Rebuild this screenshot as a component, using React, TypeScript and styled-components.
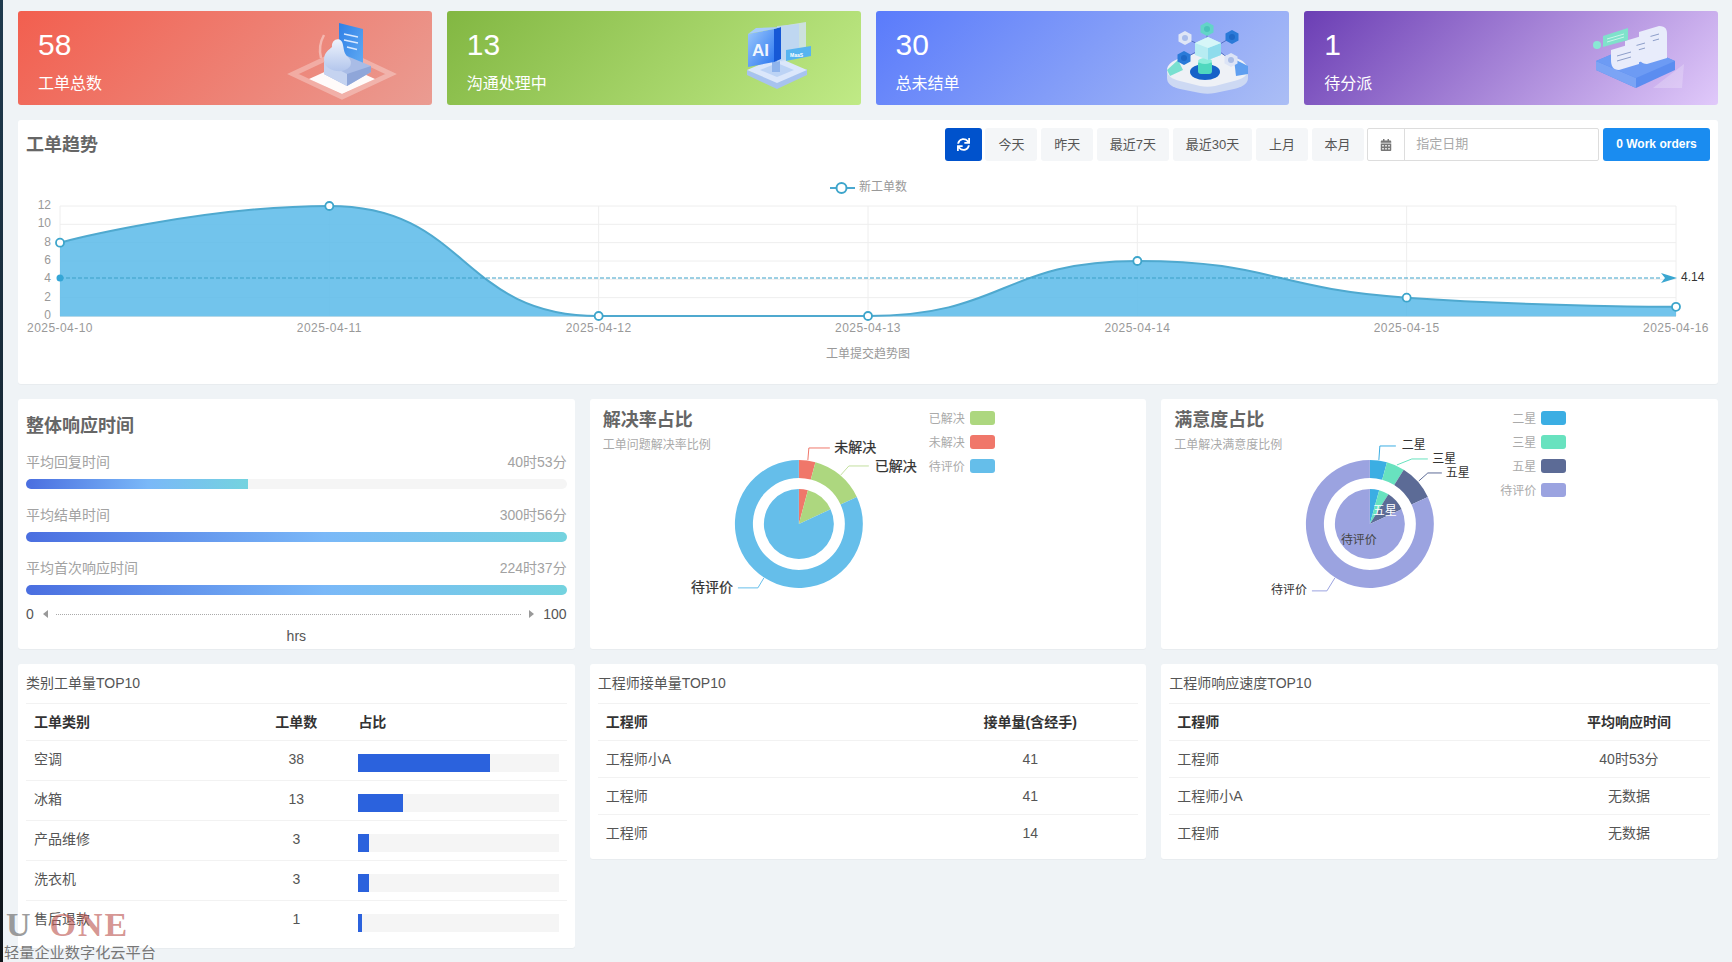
import React from "react";
import styled, { createGlobalStyle } from "styled-components";
import { FaSync, FaCalendarAlt } from "react-icons/fa";

const Global = createGlobalStyle`
  html, body { margin: 0; padding: 0; height: 100%; background: #eff3f6; }
  * { box-sizing: border-box; }
  body { font-family: "Liberation Sans", "Noto Sans CJK SC", sans-serif; color: #555; overflow: hidden; }
`;

const Shell = styled.div`
  position: relative;
  display: flex;
  height: 100vh;
  background: #eff3f6;
`;
const Strip = styled.div`
  width: 3px;
  flex: none;
  background: linear-gradient(180deg, #1f3a4e, #0f1419);
`;
const Main = styled.main`
  flex: 1;
  min-width: 0;
  padding: 11px 14px 0 15px;
  display: flex;
  flex-direction: column;
  gap: 15px;
`;
const StatRow = styled.section`
  display: grid;
  grid-template-columns: repeat(4, 1fr);
  gap: 15px;
`;
const StatCard = styled.div<{ $from: string; $to: string; $right: number }>`
  height: 94px;
  border-radius: 3px;
  padding: 17px 0 0 20px;
  color: #fff;
  display: flex;
  justify-content: space-between;
  background: linear-gradient(135deg, ${(p) => p.$from}, ${(p) => p.$to});
  svg { margin: -14px ${(p) => p.$right}px 0 0; flex: none; }
`;
const StatNumber = styled.div`
  font-size: 30px;
  line-height: 34px;
`;
const StatLabel = styled.div`
  font-size: 16px;
  line-height: 22px;
  margin-top: 11px;
`;
const Panel = styled.section`
  position: relative;
  background: #fff;
  border-radius: 3px;
  box-shadow: 0 1px 1px rgba(0, 0, 0, 0.03);
`;
const TrendPanel = styled(Panel)`
  height: 264px;
  padding-top: 8px;
`;
const TrendHead = styled.header`
  display: flex;
  align-items: center;
  height: 33px;
  padding: 0 8px;
  gap: 3.7px;
`;
const PanelTitle = styled.h2`
  margin: 0;
  font-size: 18px;
  line-height: 24px;
  font-weight: 700;
  color: #666;
`;
const Spacer = styled.div`
  flex: 1;
`;
const RefreshButton = styled.button`
  width: 37px;
  height: 33px;
  border: 0;
  border-radius: 3px;
  background: #0052cc;
  color: #fff;
  font-size: 13px;
  display: flex;
  align-items: center;
  justify-content: center;
  padding: 0;
`;
const RangeButton = styled.button`
  height: 33px;
  padding: 0 13px 3px;
  border: 0;
  border-radius: 3px;
  background: #f4f6f8;
  color: #555;
  font: 13px "Liberation Sans", "Noto Sans CJK SC", sans-serif;
`;
const DateField = styled.div`
  width: 232px;
  height: 33px;
  display: flex;
  border: 1px solid #ddd;
  border-radius: 2px;
`;
const DateAddon = styled.span`
  width: 37px;
  flex: none;
  display: flex;
  align-items: center;
  justify-content: center;
  border-right: 1px solid #ddd;
  color: #777;
  font-size: 12px;
`;
const DateInput = styled.input`
  flex: 1;
  min-width: 0;
  border: 0;
  outline: 0;
  padding: 0 11px 2px;
  background: transparent;
  font: 13px "Liberation Sans", "Noto Sans CJK SC", sans-serif;
  &::placeholder { color: #aaa; }
`;
const OrdersButton = styled.button`
  width: 107px;
  height: 33px;
  border: 0;
  border-radius: 3px;
  background: #1a8cf0;
  color: #fff;
  font: 700 12px "Liberation Sans", "Noto Sans CJK SC", sans-serif;
  padding: 0 0 2px;
`;
const TrendChart = styled.svg`
  display: block;
  margin-top: 9px;
`;
const AxisText = styled.text<{ $wide?: boolean }>`
  font-size: 12px;
  fill: #999;
  letter-spacing: ${(p) => (p.$wide ? "0.45px" : "0")};
`;
const ThreeCols = styled.section<{ $top?: boolean }>`
  display: grid;
  grid-template-columns: repeat(3, minmax(0, 1fr));
  gap: 15px;
  align-items: ${(p) => (p.$top ? "start" : "stretch")};
`;
const ResponsePanel = styled(Panel)`
  padding: 15px 8px 3px 8px;
`;
const MetricHead = styled.div`
  display: flex;
  justify-content: space-between;
  margin-top: 16px;
  font-size: 14px;
  line-height: 20px;
  color: #a2a2a2;
  &:first-of-type { margin-top: 14px; }
`;
const Track = styled.div`
  height: 10px;
  margin-top: 7px;
  border-radius: 5px;
  background: #f5f5f5;
  overflow: hidden;
`;
const Fill = styled.div`
  height: 100%;
  background: linear-gradient(90deg, #4a6ee0, #7ab8f8 55%, #74d3df);
`;
const RangeAxis = styled.div`
  display: flex;
  align-items: center;
  margin-top: 9px;
  font-size: 14px;
  line-height: 20px;
  color: #555;
`;
const Arrow = styled.i<{ $right?: boolean }>`
  width: 0;
  height: 0;
  margin: 0 ${(p) => (p.$right ? "9px" : "0")} 0 ${(p) => (p.$right ? "0" : "9px")};
  border-top: 4px solid transparent;
  border-bottom: 4px solid transparent;
  ${(p) => (p.$right ? "border-left: 5px solid #999;" : "border-right: 5px solid #999;")}
`;
const DottedLine = styled.div`
  flex: 1;
  margin: 0 8px;
  border-top: 1px dotted #aaa;
`;
const Unit = styled.div`
  margin-top: 2px;
  text-align: center;
  font-size: 14px;
  line-height: 20px;
  color: #555;
`;
const PieHead = styled.div`
  width: 405px;
  padding: 9px 0 0 13px;
  display: flex;
  justify-content: space-between;
  align-items: flex-start;
`;
const PieSub = styled.p`
  margin: 4px 0 0;
  font-size: 12px;
  line-height: 18px;
  color: #aaa;
`;
const Legend = styled.ul`
  list-style: none;
  margin: 3px 0 0;
  padding: 0;
  display: flex;
  flex-direction: column;
  gap: 10px;
`;
const LegendRow = styled.li`
  display: flex;
  justify-content: flex-end;
  align-items: center;
  gap: 5px;
  height: 14px;
  font-size: 12px;
  color: #aaa;
`;
const LegendText = styled.span`
  position: relative;
  top: -1px;
`;
const Swatch = styled.span<{ $color: string }>`
  width: 25px;
  height: 14px;
  border-radius: 3px;
  background: ${(p) => p.$color};
`;
const PieCanvas = styled.svg`
  position: absolute;
  inset: 0;
  width: 100%;
  height: 100%;
  pointer-events: none;
`;
const PieLabel = styled.text<{ $size: number; $tone: string }>`
  font-size: ${(p) => p.$size}px;
  fill: ${(p) => p.$tone};
  stroke: ${(p) => (p.$size > 12 ? p.$tone : "none")};
  stroke-width: 0.25px;
`;
const TablePanel = styled(Panel)`
  padding: 9px 8px 8px;
`;
const TableTitle = styled.h3`
  margin: 0 0 10px;
  font-size: 14px;
  line-height: 20px;
  font-weight: 400;
  color: #555;
`;
const Table = styled.table`
  width: 100%;
  table-layout: fixed;
  border-collapse: separate;
  border-spacing: 0;
  font-size: 14px;
  line-height: 20px;
`;
const Th = styled.th<{ $w: string; $center?: boolean }>`
  width: ${(p) => p.$w};
  padding: 8px;
  border-top: 1px solid #f2f2f2;
  font-weight: 700;
  color: #333;
  text-align: ${(p) => (p.$center ? "center" : "left")};
`;
const Td = styled.td<{ $center?: boolean }>`
  padding: 8px;
  border-top: 1px solid #f2f2f2;
  color: #555;
  vertical-align: top;
  text-align: ${(p) => (p.$center ? "center" : "left")};
`;
const ShareTrack = styled.div`
  height: 18px;
  margin-top: 5px;
  background: #f5f5f5;
`;
const ShareFill = styled.div`
  height: 100%;
  background: #2b62dd;
`;
const Watermark = styled.div`
  position: absolute;
  left: 4px;
  bottom: -1px;
  pointer-events: none;
`;
const LogoLine = styled.div`
  display: flex;
  font-family: "Liberation Serif", serif;
  font-size: 34px;
  font-weight: 700;
  line-height: 24px;
  height: 24px;
  margin-left: 2px;
`;
const LogoU = styled.span`
  color: rgba(130, 130, 130, 0.8);
  margin-right: 19px;
`;
const LogoOne = styled.span`
  color: rgba(190, 90, 85, 0.65);
  letter-spacing: 2px;
`;
const LogoCaption = styled.div`
  font-size: 15.2px;
  line-height: 20px;
  color: #777;
  margin-top: 6px;
`;

const xs = [0, 1, 2, 3, 4, 5, 6].map((i) => 42 + (i * 1616) / 6);
const values = [8, 12, 0, 0, 6, 2, 1];
const yOf = (v: number) => 146 - (v * 110) / 12;
const points = values.map((v, i) => [xs[i], yOf(v)]);
const dates = ["10", "11", "12", "13", "14", "15", "16"].map((d) => `2025-04-${d}`);

const clamp = (v: number, a: number, b: number) => Math.max(Math.min(a, b), Math.min(Math.max(a, b), v));

function smoothPath(pts: number[][], smooth = 0.5) {
  let d = `M${pts[0][0]} ${pts[0][1]}`;
  let cpx = pts[0][0];
  let cpy = pts[0][1];
  for (let i = 0; i < pts.length - 1; i++) {
    const [x, y] = pts[i + 1];
    let nx = x;
    let ny = y;
    let c2x = x;
    let c2y = y;
    if (i + 2 < pts.length) {
      const [px, py] = pts[i];
      const [qx, qy] = pts[i + 2];
      const lp = Math.hypot(x - px, y - py) || 1;
      const ln = Math.hypot(qx - x, qy - y) || 1;
      const r = ln / (ln + lp);
      nx = clamp(x + (qx - px) * smooth * r, x, qx);
      ny = clamp(y + (qy - py) * smooth * r, y, qy);
      c2x = clamp(x - ((nx - x) * lp) / ln, px, x);
      c2y = clamp(y - ((ny - y) * lp) / ln, py, y);
      nx = x + ((x - c2x) * ln) / lp;
      ny = y + ((y - c2y) * ln) / lp;
    }
    d += `C${cpx} ${cpy} ${c2x} ${c2y} ${x} ${y}`;
    cpx = nx;
    cpy = ny;
  }
  return d;
}

const linePath = smoothPath(points);
const areaPath = `${linePath}L${xs[6]} 146L${xs[0]} 146Z`;

function polar(r: number, deg: number, cx = 209, cy = 125) {
  const a = (deg * Math.PI) / 180;
  return `${cx + r * Math.sin(a)} ${cy - r * Math.cos(a)}`;
}
function ringSlice(a: number, b: number, ro: number, ri: number) {
  const large = b - a > 180 ? 1 : 0;
  if (ri === 0) return `M209 125L${polar(ro, a)}A${ro} ${ro} 0 ${large} 1 ${polar(ro, b)}Z`;
  return `M${polar(ro, a)}A${ro} ${ro} 0 ${large} 1 ${polar(ro, b)}L${polar(ri, b)}A${ri} ${ri} 0 ${large} 0 ${polar(ri, a)}Z`;
}

type Slice = { from: number; to: number; color: string };
type Label = { text: string; x: number; y: number; line: string; color: string };

function PieChart({ slices, labels, size, inner }: { slices: Slice[]; labels: Label[]; size: number; inner?: React.ReactNode }) {
  return (
    <PieCanvas viewBox="0 0 557 250" preserveAspectRatio="xMinYMin meet">
      {slices.map((s) => (
        <path key={`o${s.from}`} d={ringSlice(s.from, s.to, 64, 46)} fill={s.color} />
      ))}
      {slices.map((s) => (
        <path key={`i${s.from}`} d={ringSlice(s.from, s.to, 35, 0)} fill={s.color} />
      ))}
      {labels.map((l) => (
        <g key={l.text}>
          <polyline points={l.line} fill="none" stroke={l.color} strokeWidth="1" />
          <PieLabel x={l.x} y={l.y} $size={size} $tone="#333" dominantBaseline="central">
            {l.text}
          </PieLabel>
        </g>
      ))}
      {inner}
    </PieCanvas>
  );
}

const BLUE = "#65beea";
const solved: Slice[] = [
  { from: 0, to: 15, color: "#f0776a" },
  { from: 15, to: 65, color: "#add77f" },
  { from: 65, to: 360, color: BLUE },
];
const solvedLabels: Label[] = [
  { text: "未解决", x: 244.5, y: 48, line: "218,61 219,49 240,49", color: "#f0776a" },
  { text: "已解决", x: 285, y: 67, line: "251,76 259,67 279,67", color: "#c3e09f" },
  { text: "待评价", x: 101, y: 188, line: "174,179 168,189 148,189", color: BLUE },
];
const rated: Slice[] = [
  { from: 0, to: 15.5, color: "#3baee3" },
  { from: 15.5, to: 32, color: "#68e2bf" },
  { from: 32, to: 65, color: "#5c6b96" },
  { from: 65, to: 360, color: "#9ba3e0" },
];
const ratedLabels: Label[] = [
  { text: "二星", x: 241, y: 46, line: "218,61 219,47 235,47", color: "#3baee3" },
  { text: "三星", x: 271.5, y: 60, line: "236,66 251,60 267,60", color: "#68e2bf" },
  { text: "五星", x: 285, y: 74, line: "258,82 267,74 281,74", color: "#5c6b96" },
  { text: "待评价", x: 110, y: 191, line: "174,179 166,192 151,192", color: "#9ba3e0" },
];

const categories = [
  { name: "空调", count: 38 },
  { name: "冰箱", count: 13 },
  { name: "产品维修", count: 3 },
  { name: "洗衣机", count: 3 },
  { name: "售后退款", count: 1 },
];

function TicketArt() {
  return (
    <svg width="110" height="88" viewBox="0 0 110 88">
      <defs>
        <linearGradient id="t1" x1="0" y1="0" x2="1" y2="1">
          <stop offset="0" stopColor="#2f7fe6" />
          <stop offset="1" stopColor="#64aef4" />
        </linearGradient>
        <linearGradient id="t2" x1="0" y1="0" x2="0" y2="1">
          <stop offset="0" stopColor="#eef3fc" />
          <stop offset="1" stopColor="#b3c6ec" />
        </linearGradient>
      </defs>
      <polygon points="55,37 104,60 55,83 6,60" fill="none" stroke="#fff" strokeOpacity=".3" strokeWidth="5" />
      <polygon points="55,50 88,65 55,80 22,65" fill="#fff" fillOpacity=".96" />
      <polygon points="52,9 76,15 76,58 52,52" fill="url(#t1)" />
      <path d="M57 20l14 3M57 26l14 3M60 33l10 2.500" stroke="#dbe9ff" strokeWidth="1.300" />
      <path d="M37 48L60 42L84 52V58L60 72L37 60Z" fill="#a9bce6" />
      <path d="M37 48L60 60V72L37 60Z" fill="#c5d3f0" />
      <path d="M60 60L84 52V58L60 72Z" fill="#8fa6d9" />
      <path d="M37 46c0-8 5-10 8-13c-1-9 10-11 11-2c1 5 1 9 6 13c4 5 2 11-7 13c-8 1-18-3-18-11z" fill="url(#t2)" />
      <path d="M34 44c-2-8-1-16 3-23" fill="none" stroke="#fff" strokeOpacity=".4" strokeWidth="2.500" />
    </svg>
  );
}

function AiArt() {
  return (
    <svg width="110" height="88" viewBox="0 0 110 88">
      <defs>
        <linearGradient id="a1" x1="0" y1="0" x2="1" y2="1">
          <stop offset="0" stopColor="#9cc8fc" />
          <stop offset="1" stopColor="#2a76f0" />
        </linearGradient>
      </defs>
      <polygon points="56,68 86,55 86,61 56,75 26,61 26,56" fill="#a7c3ef" />
      <polygon points="56,43 86,56 56,69 26,56" fill="#dbe7fb" />
      <polygon points="56,49 73,56 56,63 39,56" fill="#bcd3f5" />
      <rect x="51" y="44" width="8" height="14" fill="#8fb4ec" />
      <polygon points="60,12 85,8 85,42 60,48" fill="#d3e2f7" fillOpacity=".8" />
      <polygon points="56,12 78,10 78,42 56,48" fill="#bcd4f6" fillOpacity=".8" />
      <polygon points="27,20 53,15 53,48 27,53" fill="url(#a1)" />
      <polygon points="53,15 60,13 60,45 53,48" fill="#1658d6" />
      <polygon points="27,20 35,14 60,13 53,15" fill="#a8cdfb" />
      <text x="31" y="42" fontSize="17" fontWeight="700" fontFamily="Liberation Sans, sans-serif" fill="#fff" fillOpacity=".92">AI</text>
      <polygon points="65,36 90,32 90,42 65,47" fill="#57b4f0" />
      <text x="69" y="43" fontSize="5" fontWeight="700" fontFamily="Liberation Sans, sans-serif" fill="#fff">MaaS</text>
    </svg>
  );
}

function NodesArt() {
  const hex = (cx: number, cy: number, fill: string, hole?: string) => (
    <g key={`${cx}-${cy}`}>
      <polygon points={`${cx},${cy - 7} ${cx + 6.500},${cy - 3.500} ${cx + 6.500},${cy + 3.500} ${cx},${cy + 7} ${cx - 6.500},${cy + 3.500} ${cx - 6.500},${cy - 3.500}`} fill={fill} />
      {hole && <circle cx={cx} cy={cy} r="3" fill={hole} />}
    </g>
  );
  return (
    <svg width="110" height="88" viewBox="0 0 110 88">
      <path d="M15 60C15 54 20 50 28 47L48 41C53 40 58 40 63 41L84 47C91 49 96 54 96 60V64C96 70 90 73 82 75L63 79C58 80 53 80 48 79L28 75C20 73 15 70 15 64Z" fill="#cdd9f3" />
      <path d="M15 56C15 51 20 47 28 44L48 38C53 37 58 37 63 38L84 44C91 46 96 51 96 56C96 62 90 65 82 67L63 72C58 73 53 73 48 72L28 67C20 65 15 62 15 56Z" fill="#eef1f6" />
      <path d="M82 45L96 52V60L84 62Z" fill="#5f9ff0" />
      <path d="M15 56L26 46L31 56L18 62Z" fill="#79e0d0" />
      <ellipse cx="53" cy="58" rx="15" ry="8" fill="#1662c8" />
      <rect x="46" y="47" width="14" height="13" rx="3" fill="#4fd8bf" />
      <ellipse cx="53" cy="47" rx="7" ry="3" fill="#8eeedd" />
      <path d="M33 24L46 30M80 23L68 30M33 44L44 38M79 46L68 38M55 16V26" stroke="#5470c6" strokeWidth="1" />
      <polygon points="56,23 69,29 69,41 56,46 43,41 43,29" fill="#b7ecf2" />
      <polygon points="56,34 69,29 69,41 56,46" fill="#8fdcec" />
      <polygon points="56,23 69,29 56,34 43,29" fill="#d6f6f8" />
      {hex(33, 24, "#dfe6f6", "#a9bdec")}
      {hex(55, 15, "#63d4c8", "#4bc3bb")}
      {hex(80, 23, "#2a7ad8", "#1e68c6")}
      {hex(32, 44, "#2a7ad8", "#1e68c6")}
      {hex(79, 46, "#dce4f6", "#aabde6")}
    </svg>
  );
}

function PaperArt() {
  const paper = (x: number, y: number, h: number) => (
    <g key={x}>
      <path d={`M${x} ${y + 4}L${x + 20} ${y - 2}C${x + 27} ${y - 2} ${x + 28} ${y + 2} ${x + 28} ${y + 6}V${y + h - 6}L${x + 8} ${y + h}C${x + 2} ${y + h} ${x} ${y + h - 4} ${x} ${y + h - 10}Z`} fill="#e8ecfb" />
      <path d={`M${x + 6} ${y + 10}l14-4M${x + 6} ${y + 15}l14-4`} stroke="#8d9ec9" strokeWidth="1" />
    </g>
  );
  return (
    <svg width="110" height="88" viewBox="0 0 110 88">
      <polygon points="71,74 102,50 100,74" fill="#fff" fillOpacity=".22" />
      <polygon points="14,47 54,30 93,47 93,56 54,74 14,56" fill="#5b8df0" />
      <polygon points="14,47 54,64 54,74 14,56" fill="#7ba4f5" />
      <polygon points="14,47 54,30 93,47 54,64" fill="#6d9bf4" />
      {paper(57, 14, 36)}
      {paper(43, 23, 27)}
      {paper(29, 32, 24)}
      <polygon points="21,22 46,14 46,26 21,33" fill="#7fe2cb" />
      <path d="M25 25l17-5M25 28l17-5" stroke="#c9f6ea" strokeWidth="1" />
      <circle cx="15" cy="31" r="4" fill="#89e8d4" />
    </svg>
  );
}

export default function App() {
  return (
    <Shell>
      <Global />
      <Strip />
      <Main>
        <StatRow>
          <StatCard $from="#f25f4f" $to="#ea9c92" $right={35}>
            <div>
              <StatNumber>58</StatNumber>
              <StatLabel>工单总数</StatLabel>
            </div>
            <TicketArt />
          </StatCard>
          <StatCard $from="#82b742" $to="#c0ea86" $right={30}>
            <div>
              <StatNumber>13</StatNumber>
              <StatLabel>沟通处理中</StatLabel>
            </div>
            <AiArt />
          </StatCard>
          <StatCard $from="#5a7bfb" $to="#abbef5" $right={27}>
            <div>
              <StatNumber>30</StatNumber>
              <StatLabel>总未结单</StatLabel>
            </div>
            <NodesArt />
          </StatCard>
          <StatCard $from="#6b3eb4" $to="#e0c9fa" $right={26}>
            <div>
              <StatNumber>1</StatNumber>
              <StatLabel>待分派</StatLabel>
            </div>
            <PaperArt />
          </StatCard>
        </StatRow>

        <TrendPanel>
          <TrendHead>
            <PanelTitle>工单趋势</PanelTitle>
            <Spacer />
            <RefreshButton aria-label="refresh">
              <FaSync />
            </RefreshButton>
            <RangeButton>今天</RangeButton>
            <RangeButton>昨天</RangeButton>
            <RangeButton>最近7天</RangeButton>
            <RangeButton>最近30天</RangeButton>
            <RangeButton>上月</RangeButton>
            <RangeButton>本月</RangeButton>
            <DateField>
              <DateAddon>
                <FaCalendarAlt />
              </DateAddon>
              <DateInput placeholder="指定日期" readOnly />
            </DateField>
            <OrdersButton>0 Work orders</OrdersButton>
          </TrendHead>
          <TrendChart width="1700" height="195" viewBox="0 0 1700 195">
            <line x1="812" y1="18" x2="837" y2="18" stroke="#4aa8d0" strokeWidth="2" />
            <circle cx="823.500" cy="18" r="5" fill="#fff" stroke="#3da5cb" strokeWidth="2" />
            <AxisText x="841" y="17" dominantBaseline="central">新工单数</AxisText>
            {[0, 2, 4, 6, 8, 10, 12].map((v) => (
              <g key={v}>
                {v > 0 && <line x1={xs[0]} x2={xs[6]} y1={yOf(v)} y2={yOf(v)} stroke="#eeeeee" />}
                <AxisText x="33" y={yOf(v) - 1} textAnchor="end" dominantBaseline="central">{v}</AxisText>
              </g>
            ))}
            {xs.map((x, i) => (
              <g key={x}>
                <line x1={x} x2={x} y1="36" y2="146" stroke="#eeeeee" />
                <AxisText $wide x={x} y="158" textAnchor="middle" dominantBaseline="central">{dates[i]}</AxisText>
              </g>
            ))}
            <path d={areaPath} fill="#5dbbe9" fillOpacity=".87" />
            <line x1={xs[0]} x2={xs[6]} y1="146.500" y2="146.500" stroke="#b5d8e8" />
            <path d={linePath} fill="none" stroke="#4fa9cf" strokeWidth="2" />
            <line x1={xs[0]} x2={xs[6] - 14} y1="108" y2="108" stroke="#3aa0c8" strokeDasharray="4 2" />
            <circle cx={xs[0]} cy="108" r="3.500" fill="#35a6d6" />
            <path d="M1659 108L1643 103L1647 108L1643 113Z" fill="#3aa6d0" />
            {points.map(([x, y]) => (
              <circle key={x} cx={x} cy={y} r="4" fill="#fff" stroke="#3da5cb" strokeWidth="1.800" />
            ))}
            <AxisText x="1663" y="107" dominantBaseline="central" style={{ fill: "#333" }}>4.14</AxisText>
            <AxisText x="850" y="184" textAnchor="middle" dominantBaseline="central">工单提交趋势图</AxisText>
          </TrendChart>
        </TrendPanel>

        <ThreeCols>
          <ResponsePanel>
            <PanelTitle>整体响应时间</PanelTitle>
            <MetricHead><span>平均回复时间</span><span>40时53分</span></MetricHead>
            <Track><Fill style={{ width: "41%" }} /></Track>
            <MetricHead><span>平均结单时间</span><span>300时56分</span></MetricHead>
            <Track><Fill style={{ width: "100%" }} /></Track>
            <MetricHead><span>平均首次响应时间</span><span>224时37分</span></MetricHead>
            <Track><Fill style={{ width: "100%" }} /></Track>
            <RangeAxis>
              <span>0</span>
              <Arrow />
              <DottedLine />
              <Arrow $right />
              <span>100</span>
            </RangeAxis>
            <Unit>hrs</Unit>
          </ResponsePanel>

          <Panel>
            <PieHead>
              <div>
                <PanelTitle>解决率占比</PanelTitle>
                <PieSub>工单问题解决率比例</PieSub>
              </div>
              <Legend>
                <LegendRow><LegendText>已解决</LegendText><Swatch $color="#add77f" /></LegendRow>
                <LegendRow><LegendText>未解决</LegendText><Swatch $color="#f0776a" /></LegendRow>
                <LegendRow><LegendText>待评价</LegendText><Swatch $color={BLUE} /></LegendRow>
              </Legend>
            </PieHead>
            <PieChart slices={solved} labels={solvedLabels} size={14} />
          </Panel>

          <Panel>
            <PieHead>
              <div>
                <PanelTitle>满意度占比</PanelTitle>
                <PieSub>工单解决满意度比例</PieSub>
              </div>
              <Legend>
                <LegendRow><LegendText>二星</LegendText><Swatch $color="#3baee3" /></LegendRow>
                <LegendRow><LegendText>三星</LegendText><Swatch $color="#68e2bf" /></LegendRow>
                <LegendRow><LegendText>五星</LegendText><Swatch $color="#5c6b96" /></LegendRow>
                <LegendRow><LegendText>待评价</LegendText><Swatch $color="#9ba3e0" /></LegendRow>
              </Legend>
            </PieHead>
            <PieChart
              slices={rated}
              labels={ratedLabels}
              size={12}
              inner={
                <>
                  <PieLabel x={212} y={112} $size={12} $tone="#fff" dominantBaseline="central">五星</PieLabel>
                  <PieLabel x={180} y={141} $size={12} $tone="#444" dominantBaseline="central">待评价</PieLabel>
                </>
              }
            />
          </Panel>
        </ThreeCols>

        <ThreeCols $top>
          <TablePanel>
            <TableTitle>类别工单量TOP10</TableTitle>
            <Table>
              <thead>
                <tr>
                  <Th $w="40%">工单类别</Th>
                  <Th $w="20%" $center>工单数</Th>
                  <Th $w="40%">占比</Th>
                </tr>
              </thead>
              <tbody>
                {categories.map((c) => (
                  <tr key={c.name}>
                    <Td>{c.name}</Td>
                    <Td $center>{c.count}</Td>
                    <Td>
                      <ShareTrack>
                        <ShareFill style={{ width: `${(c.count / 58) * 100}%` }} />
                      </ShareTrack>
                    </Td>
                  </tr>
                ))}
              </tbody>
            </Table>
          </TablePanel>

          <TablePanel>
            <TableTitle>工程师接单量TOP10</TableTitle>
            <Table>
              <thead>
                <tr>
                  <Th $w="60%">工程师</Th>
                  <Th $w="40%" $center>接单量(含经手)</Th>
                </tr>
              </thead>
              <tbody>
                <tr><Td>工程师小A</Td><Td $center>41</Td></tr>
                <tr><Td>工程师</Td><Td $center>41</Td></tr>
                <tr><Td>工程师</Td><Td $center>14</Td></tr>
              </tbody>
            </Table>
          </TablePanel>

          <TablePanel>
            <TableTitle>工程师响应速度TOP10</TableTitle>
            <Table>
              <thead>
                <tr>
                  <Th $w="70%">工程师</Th>
                  <Th $w="30%" $center>平均响应时间</Th>
                </tr>
              </thead>
              <tbody>
                <tr><Td>工程师</Td><Td $center>40时53分</Td></tr>
                <tr><Td>工程师小A</Td><Td $center>无数据</Td></tr>
                <tr><Td>工程师</Td><Td $center>无数据</Td></tr>
              </tbody>
            </Table>
          </TablePanel>
        </ThreeCols>
      </Main>
      <Watermark>
        <LogoLine>
          <LogoU>U</LogoU>
          <LogoOne>ONE</LogoOne>
        </LogoLine>
        <LogoCaption>轻量企业数字化云平台</LogoCaption>
      </Watermark>
    </Shell>
  );
}
